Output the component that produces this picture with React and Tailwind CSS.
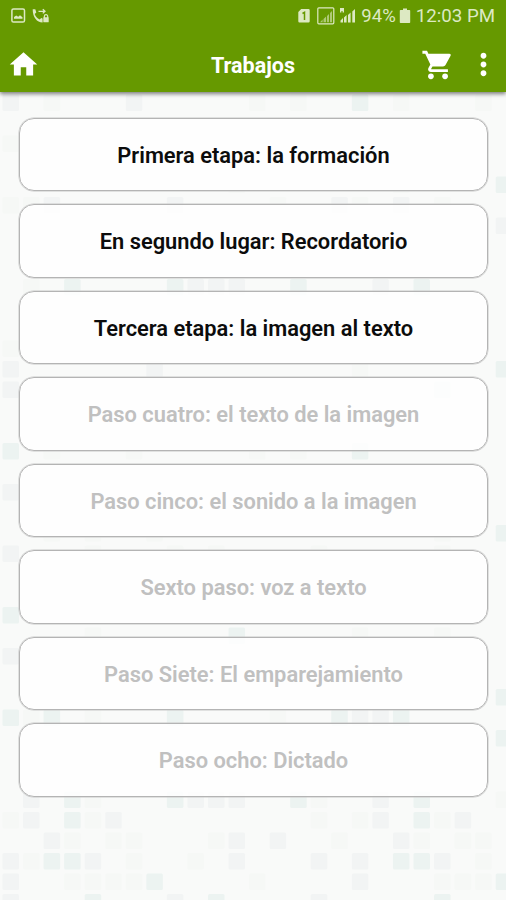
import clsx from "clsx";
import { MdHome, MdMoreVert } from "react-icons/md";

const steps = [
  { title: "Primera etapa: la formación", unlocked: true },
  { title: "En segundo lugar: Recordatorio", unlocked: true },
  { title: "Tercera etapa: la imagen al texto", unlocked: true },
  { title: "Paso cuatro: el texto de la imagen", unlocked: false },
  { title: "Paso cinco: el sonido a la imagen", unlocked: false },
  { title: "Sexto paso: voz a texto", unlocked: false },
  { title: "Paso Siete: El emparejamiento", unlocked: false },
  { title: "Paso ocho: Dictado", unlocked: false },
];

// row -> tiles, each one is tone + column (t = teal, g = gray, w = faint)
const mosaic = {
  0: "g0 w2 g6 w12 w14 t17 w19 w23",
  2: "w0",
  4: "t24 w11 w19",
  5: "w0 w1 g2 g8 w13 g16 w17 g19 w21",
  6: "g24 w2 w13",
  8: "w6 w17",
  9: "w1 t3 t8 g9 g10 g11 t14 g18 t20",
  12: "w0",
  13: "g0 g7 w17 t24",
  14: "g0 w4 t21",
  16: "w9 w17",
  17: "t0 w2 w6 w12 w14 t17",
  19: "g0 w2 w11",
  21: "w2 w4 w7 w21 t24",
  22: "g0 w4 w8 w10 w15 w21",
  25: "t0 w3 w17",
  26: "w4 t11 w17 w21",
  27: "g0 w2",
  29: "t24 w2 w21",
  30: "t0 w1 t2 w4 t8 w13 t16 g17 g18 t19",
  31: "t24 w13",
  34: "g1 t3 w4 t8 g9 g10 g11 t14 w15 g18 t20 w24",
  35: "w0 g1 t3 w4 g5 w15 w17 g18 t20 w21 g22",
  36: "g2 w3 w5 w6 w10 g11 g13 w16 g19 w20 w22 w23",
  37: "g0 w1 t2 t3 g4 w6 w9 g11 g15 g17 t19 t20 g21 w23",
  38: "g0 w3 w4 w5 w6 t7 w12 g17 w21 w22 w23 t24",
  39: "g0 t4 g8 t10 g15 t21",
};

const tones = { t: "#ecf3f1", g: "#f2f4f4", w: "#f6f8f6" };

function Mosaic() {
  return (
    <svg className="absolute inset-0 h-full w-full" viewBox="0 0 506 900" aria-hidden="true">
      {Object.entries(mosaic).map(([row, tiles]) =>
        tiles.split(" ").map((tile) => (
          <rect
            key={`${row}-${tile}`}
            x={2.5 + 20.55 * Number(tile.slice(1))}
            y={94.5 + 20.5 * Number(row)}
            width="16.5"
            height="16.5"
            rx="1.5"
            fill={tones[tile[0]]}
          />
        ))
      )}
    </svg>
  );
}

function CartIcon({ className }) {
  return (
    <svg className={className} viewBox="0 0 24 24" fill="currentColor">
      <circle cx="7" cy="20" r="2" />
      <circle cx="17" cy="20" r="2" />
      <path d="M1 2v2h2l3.600 7.590-1.350 2.450c-.16.280-.25.610-.25.960 0 1.100.9 2 2 2h12v-2H7.420c-.14 0-.25-.11-.25-.25l.03-.12.900-1.630h7.450c.75 0 1.410-.41 1.750-1.030l3.580-6.490A1 1 0 0 0 20 4H5.210l-.94-2z" />
    </svg>
  );
}

function StatusBar() {
  return (
    <div className="flex h-8 items-center px-[11px] text-[#dde9c3]">
      <svg className="h-4 w-[15px]" viewBox="0 0 15 16" fill="none">
        <rect x="0.9" y="1" width="12.6" height="13" rx="1.6" stroke="currentColor" strokeWidth="1.5" />
        <path d="M3 10.8V9l2.200-1.500 2 1.300L9 7.200l2.500 2v1.600z" fill="currentColor" />
      </svg>
      <svg className="ml-1.5 h-4 w-[18px]" viewBox="0 0 18 16" fill="none">
        <path
          d="M.7 1.300h2.600l1 3.200-1.600 1.400c.8 2.500 2.500 4.400 5 5.600l1.500-1.600 1.400.5v4.200C5 14.500.6 9.200.7 1.300z"
          fill="currentColor"
        />
        <path d="M6.500 3.300h6.200M10.800 1.200l2.200 2.100-2.200 2.100" stroke="currentColor" strokeWidth="1.300" />
        <path d="M12.300 10V8.400a1.700 1.700 0 0 1 3.400 0V10" stroke="currentColor" strokeWidth="1.200" />
        <rect x="11.300" y="9.300" width="5.400" height="5" rx="0.600" fill="currentColor" />
      </svg>

      <div className="ml-auto flex items-center">
        <svg className="h-4 w-3" viewBox="0 0 12 16">
          <path d="M3.200 1H10.500a1.200 1.200 0 0 1 1.200 1.200v11.100a1.200 1.200 0 0 1-1.200 1.200h-9A1.200 1.200 0 0 1 .3 13.300V4z" fill="currentColor" />
          <path d="M4.500 5.500 6.500 4.300V12" fill="none" stroke="#669900" strokeWidth="1.500" />
        </svg>
        <svg className="ml-[7px] h-[18px] w-[18px]" viewBox="0 0 18 18">
          <rect x="0.800" y="0.800" width="16" height="16" rx="1" fill="none" stroke="currentColor" strokeWidth="1.200" />
          <path d="M3 15.200h2.600v-2.600zM6.500 15.200h2.600V9.500L6.500 12zM10 15.200h2V7l-2 2zM13 15.200h2V4l-2 2z" fill="currentColor" opacity="0.600" />
        </svg>
        <svg className="ml-[5px] h-4 w-4" viewBox="0 0 16 16" fill="currentColor">
          <path d="M0 0h4v4.500H2.600V3H1.400v1.500H0zM.5 14.500H3V10L.5 12.500zM4 14.500h2.600V7L4 9.500zM8 14.500h2.600V4.500L8 7zM12.300 14.500h2.700V1l-2.700 2.500z" />
        </svg>
        <span className="ml-[5px] text-[18.5px] leading-none">94%</span>
        <svg className="ml-[3px] h-4 w-[12px]" viewBox="0 0 11 16" fill="currentColor">
          <path d="M3.500.5h4V2H10a.7.700 0 0 1 .7.700v11.600a.7.700 0 0 1-.7.700H1a.7.700 0 0 1-.7-.7V2.700A.7.700 0 0 1 1 2h2.500z" />
        </svg>
        <span className="ml-[5px] text-[18.7px] leading-none">12:03 PM</span>
      </div>
    </div>
  );
}

function Toolbar() {
  return (
    <div className="grid h-[60px] grid-cols-3 items-center pt-[5px] text-white">
      <MdHome className="ml-[7px] size-[33px]" />
      <h1 className="pt-[2px] text-center text-[21.5px] font-bold leading-none">Trabajos</h1>
      <div className="flex items-center justify-end">
        <CartIcon className="size-[34px]" />
        <MdMoreVert className="ml-[11px] mr-[5px] size-[35px]" />
      </div>
    </div>
  );
}

function StepButton({ title, unlocked }) {
  return (
    <button
      disabled={!unlocked}
      className={clsx(
        "h-[73.5px] w-full rounded-[15px] border border-[#b4b4b4] bg-white/85 pt-[4px] text-[21.85px] font-semibold shadow-[0_0_0_0.5px_#c8c8c8]",
        unlocked ? "text-[#0c0c0c]" : "text-[#c0c0c0]"
      )}
    >
      {title}
    </button>
  );
}

export default function App() {
  return (
    <div className="relative h-[900px] w-[506px] overflow-hidden bg-[#f9faf9] font-['Roboto',sans-serif]">
      <Mosaic />
      <header className="relative bg-[#669900] shadow-[0_2px_4px_rgba(0,0,0,0.5)]">
        <StatusBar />
        <Toolbar />
      </header>
      <main className="relative flex flex-col gap-[13px] pl-[19px] pr-[18px] pt-[25.5px]">
        {steps.map((step) => (
          <StepButton key={step.title} {...step} />
        ))}
      </main>
    </div>
  );
}
